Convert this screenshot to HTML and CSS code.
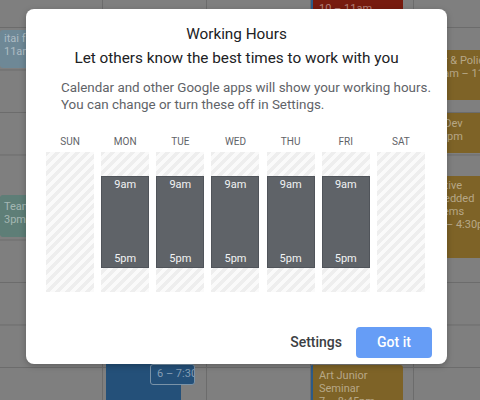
FILE: index.html
```html
<!DOCTYPE html>
<html lang="en">
<head>
<meta charset="utf-8">
<title>Working Hours</title>
<link rel="stylesheet" href="styles.css">
</head>
<body>
<div class="cal">
  <div class="col col-1">
    <div class="ev ev-itai">itai f<br>11am</div>
    <div class="ev ev-team">Team<br>3pm</div>
  </div>
  <div class="col col-2">
    <div class="ev ev-blue"></div>
    <div class="ev ev-blue-small">6 – 7:30pm</div>
  </div>
  <div class="col col-3"></div>
  <div class="col col-4">
    <div class="ev ev-red">10 – 11am</div>
    <div class="ev ev-art">Art Junior<br>Seminar<br>7 – 8:45pm</div>
  </div>
  <div class="col col-5">
    <div class="ev ev-gold ev-g1">Tutor &amp; Policy<br>9:30am – 11am</div>
    <div class="ev ev-gold ev-g2">App Dev<br>2 – 3pm</div>
    <div class="ev ev-gold ev-g3">Creative<br>Embedded<br>Systems<br>2:30 – 4:30pm</div>
  </div>
</div>

<div class="dialog">
  <div class="title">
    <div>Working Hours</div>
    <div>Let others know the best times to work with you</div>
  </div>
  <p class="desc">Calendar and other Google apps will show your working hours.<br>You can change or turn these off in Settings.</p>
  <div class="days">
    <div class="day"><div class="dname">SUN</div><div class="track"></div></div>
    <div class="day"><div class="dname">MON</div><div class="track"><div class="hours"><span>9am</span><span>5pm</span></div></div></div>
    <div class="day"><div class="dname">TUE</div><div class="track"><div class="hours"><span>9am</span><span>5pm</span></div></div></div>
    <div class="day"><div class="dname">WED</div><div class="track"><div class="hours"><span>9am</span><span>5pm</span></div></div></div>
    <div class="day"><div class="dname">THU</div><div class="track"><div class="hours"><span>9am</span><span>5pm</span></div></div></div>
    <div class="day"><div class="dname">FRI</div><div class="track"><div class="hours"><span>9am</span><span>5pm</span></div></div></div>
    <div class="day"><div class="dname">SAT</div><div class="track"></div></div>
  </div>
  <div class="actions">
    <button class="btn-text" type="button">Settings</button>
    <button class="btn-primary" type="button">Got it</button>
  </div>
</div>
</body>
</html>
```

FILE: styles.css
```css
* { box-sizing: border-box; }

html, body {
  margin: 0;
  padding: 0;
}

body {
  width: 480px;
  height: 400px;
  overflow: hidden;
  position: relative;
  font-family: Roboto, "Liberation Sans", Arial, sans-serif;
}

/* ---------- dimmed calendar behind ---------- */
.cal {
  display: grid;
  grid-template-columns: 102px 104px 104px 103px 1fr;
  height: 400px;
  background-color: #7f7f7f;
  background-image: linear-gradient(#6c6c6c 0 1px, transparent 1px);
  background-size: 100% 42.5px;
  background-position: 0 27px;
}

.col {
  position: relative;
  overflow: hidden;
  border-left: 1px solid #6c6c6c;
}

.col-1 { border-left: none; }

.ev {
  position: absolute;
  font-size: 11px;
  line-height: 13px;
  color: rgba(255, 255, 255, 0.45);
  padding: 3px 4px;
  white-space: nowrap;
  overflow: hidden;
  border-radius: 3px;
}

.ev-itai {
  left: 0;
  top: 30px;
  width: 96px;
  height: 38px;
  background: #6e8896;
  padding-top: 2px;
}

.ev-team {
  left: 0;
  top: 195px;
  width: 96px;
  height: 42px;
  background: #5e7e77;
  padding-top: 5px;
}

.ev-blue {
  left: 3px;
  top: 300px;
  width: 75px;
  height: 140px;
  background: #245079;
}

.ev-blue-small {
  left: 47px;
  top: 364px;
  width: 45px;
  height: 21px;
  background: #245079;
  border: 1px solid #7a93a8;
  padding: 2px 0 0 6px;
  font-size: 11px;
}

.ev-red {
  left: -1px;
  top: -6px;
  width: 93px;
  height: 36px;
  background: #771b0f;
  border-left: 3px solid #2d5a86;
  padding: 8px 6px 0;
  border-radius: 0 0 3px 3px;
}

.ev-art {
  left: -1px;
  top: 365px;
  width: 93px;
  height: 60px;
  background: #7e6327;
  border-left: 3px solid #2d5a86;
  padding: 4px 6px 0;
}

.ev-gold {
  left: 4px;
  width: 80px;
  background: #7e6327;
  padding: 3px 4px 0;
}

.ev-g1 { top: 50px; height: 50px; padding-top: 4px; }
.ev-g2 { top: 113px; height: 40px; padding-top: 4px; }
.ev-g3 { top: 176px; height: 82px; padding-top: 3px; }

/* ---------- dialog ---------- */
.dialog {
  position: absolute;
  left: 26px;
  top: 9px;
  width: 421px;
  height: 355px;
  background: #fff;
  border-radius: 8px;
  box-shadow: 0 2px 6px rgba(0, 0, 0, 0.25);
  padding-top: 14px;
  display: flex;
  flex-direction: column;
}

.title {
  text-align: center;
  font-size: 15.3px;
  line-height: 23.5px;
  color: #202124;
}

.desc {
  margin: 9px 0 0;
  padding: 0 10px 0 35px;
  font-size: 13.4px;
  line-height: 17px;
  color: #5f6368;
  white-space: nowrap;
}

.days {
  margin: 23px 0 0 20px;
  display: grid;
  grid-template-columns: repeat(7, 48px);
  column-gap: 7.17px;
}

.day {
  display: flex;
  flex-direction: column;
  align-items: stretch;
}

.dname {
  text-align: center;
  font-size: 10px;
  line-height: 12px;
  color: #5f6368;
  margin-bottom: 4px;
}

.track {
  height: 140px;
  padding: 24px 0;
  background: repeating-linear-gradient(135deg, #eeeeee 0 3.5px, #fafafa 3.5px 7px);
}

.hours {
  height: 92px;
  background: #5f6368;
  border: 1px solid #50545a;
  display: flex;
  flex-direction: column;
  justify-content: space-between;
  align-items: center;
  padding: 1px 0 2px;
  font-size: 11px;
  line-height: 13px;
  color: #f1f3f4;
}

.actions {
  margin-top: 35px;
  display: flex;
  justify-content: flex-end;
  align-items: center;
  gap: 14px;
  padding-right: 15px;
}

.btn-text,
.btn-primary {
  font-family: Roboto, "Liberation Sans", Arial, sans-serif;
  font-size: 14px;
  font-weight: 500;
  border: none;
  margin: 0;
  cursor: pointer;
}

.btn-text {
  background: none;
  padding: 0;
  color: #3c4043;
  line-height: 31px;
}

.btn-primary {
  width: 76px;
  height: 31px;
  line-height: 31px;
  padding: 0;
  border-radius: 4px;
  background: #669df6;
  color: #fff;
}
```
